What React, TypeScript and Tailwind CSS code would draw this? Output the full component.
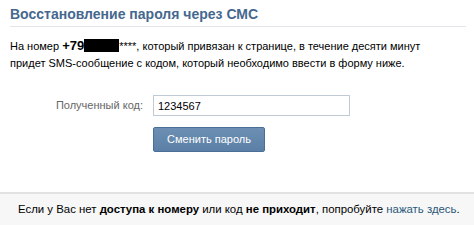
export default function App() {
  return (
    <div className="w-[474px] h-[225px] bg-white flex flex-col overflow-hidden" style={{ fontFamily: '"Liberation Sans", Arial, sans-serif' }}>
      <div className="px-[10px] pt-[5px]">
        <div className="text-[14px] font-bold text-[#45688e] leading-[18px] pb-[3px] border-b border-[#e4e7ea] mr-[-2px]">
          Восстановление пароля через СМС
        </div>
        <div className="mt-[10px] text-[11px] leading-[17px] text-[#000]">
          <div>
            На номер <b className="text-[13px]">+79</b>
            <span className="inline-block w-[35px] h-[13px] bg-black align-[-2px]"></span>
            <span className="text-[#000]">****</span>, который привязан к странице, в течение десяти минут
          </div>
          <div>придет SMS-сообщение с кодом, который необходимо ввести в форму ниже.</div>
        </div>
      </div>
      <div className="flex flex-col mt-[23px]">
        <div className="flex items-center">
          <div className="w-[143px] text-right text-[11px] text-[#666]">Полученный код:</div>
          <input
            readOnly
            value="1234567"
            className="ml-[10px] w-[197px] h-[21px] border border-[#c0cad5] px-[4px] text-[11px] text-black outline-none"
            style={{ fontFamily: '"Liberation Sans", Arial, sans-serif' }}
          />
        </div>
        <div className="ml-[153px] mt-[10px]">
          <button className="w-[112px] h-[25px] rounded-[2px] bg-gradient-to-b from-[#6d8fb3] to-[#5b7fa6] border border-[#4a6f97] text-white text-[11px]" style={{ fontFamily: '"Liberation Sans", Arial, sans-serif' }}>
            Сменить пароль
          </button>
        </div>
      </div>
      <div className="mt-auto h-[33px] bg-[#f7f7f7] border-t-2 border-[#e2e2e2] flex items-center pl-[18px] text-[11.4px] text-[#000]">
        <span>
          Если у Вас нет <b>доступа к номеру</b> или код <b>не приходит</b>, попробуйте{' '}
          <span className="text-[#2b587a]">нажать здесь</span>.
        </span>
      </div>
    </div>
  );
}
